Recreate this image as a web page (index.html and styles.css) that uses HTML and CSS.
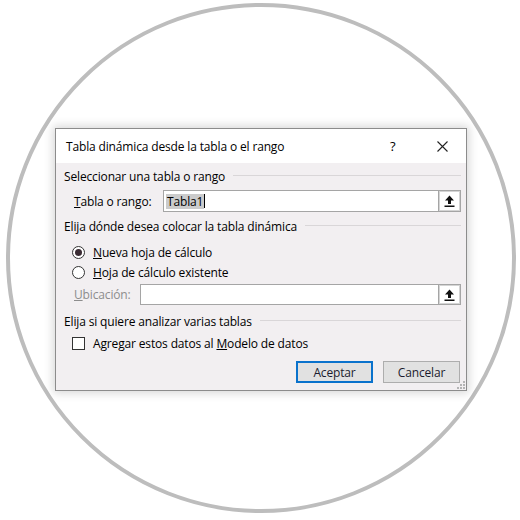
FILE: index.html
```html
<!DOCTYPE html>
<html lang="es">
<head>
<meta charset="utf-8">
<title>Tabla dinámica</title>
<link rel="stylesheet" href="styles.css">
</head>
<body>
<div class="stage">
  <div class="ring"></div>
  <div class="dialog">
    <div class="titlebar">
      <span class="title">Tabla dinámica desde la tabla o el rango</span>
      <span class="help">?</span>
      <span class="close"><svg width="11" height="11" viewBox="0 0 11 11"><path d="M0.5 0.5 L10.5 10.5 M10.5 0.5 L0.5 10.5" stroke="#222" stroke-width="1.1" fill="none"/></svg></span>
    </div>
    <div class="body">
      <div class="group-head h1"><span>Seleccionar una tabla o rango</span><i class="rule"></i></div>
      <div class="field-row f1">
        <span class="lbl lbl1"><u>T</u>abla o rango:</span>
        <div class="input"><span class="sel">Tabla1</span><span class="caret"></span></div>
        <span class="pick"><svg width="11" height="12" viewBox="0 0 11 12"><path d="M5.5 0.5 L10 5.5 L7 5.5 L7 9 L4 9 L4 5.5 L1 5.5 Z" fill="#111"/><rect x="0.5" y="10.5" width="10" height="1.5" fill="#111"/></svg></span>
      </div>
      <div class="group-head h2"><span>Elija dónde desea colocar la tabla dinámica</span><i class="rule"></i></div>
      <div class="opt r1"><span class="radio on"></span><span><u>N</u>ueva hoja de cálculo</span></div>
      <div class="opt r2"><span class="radio"></span><span><u>H</u>oja de cálculo existente</span></div>
      <div class="field-row f2">
        <span class="lbl lbl2 dis"><u>U</u>bicación:</span>
        <div class="input"></div>
        <span class="pick"><svg width="11" height="12" viewBox="0 0 11 12"><path d="M5.5 0.5 L10 5.5 L7 5.5 L7 9 L4 9 L4 5.5 L1 5.5 Z" fill="#111"/><rect x="0.5" y="10.5" width="10" height="1.5" fill="#111"/></svg></span>
      </div>
      <div class="group-head h3"><span>Elija si quiere analizar varias tablas</span><i class="rule"></i></div>
      <div class="opt c1"><span class="check"></span><span>Agregar estos datos al <u>M</u>odelo de datos</span></div>
      <div class="actions">
        <span class="btn primary">Aceptar</span>
        <span class="btn">Cancelar</span>
      </div>
    </div>
    <svg class="grip" width="9" height="9" viewBox="0 0 9 9"><g fill="#b4b4b4"><rect x="7" y="1" width="2" height="2"/><rect x="4" y="4" width="2" height="2"/><rect x="7" y="4" width="2" height="2"/><rect x="1" y="7" width="2" height="2"/><rect x="4" y="7" width="2" height="2"/><rect x="7" y="7" width="2" height="2"/></g></svg>
  </div>
</div>
</body>
</html>
```

FILE: styles.css
```css
* { box-sizing: border-box; }
html, body { margin: 0; padding: 0; background: #fff; }
body { font-family: "Open Sans", "Noto Sans", "Liberation Sans", sans-serif; font-size: 12px; letter-spacing: -0.15px; color: #000; }
.stage { position: relative; width: 520px; height: 520px; padding: 128px 0 0 55px; }
.ring { position: absolute; left: 6px; top: 3px; width: 510px; height: 510px; border: 4px solid #bdbdbd; border-radius: 50%; }
.dialog { position: relative; width: 412px; border: 1px solid #8c8c8c; background: #f2eff1; box-shadow: 0 0 9px 2px rgba(0,0,0,0.16); }
.titlebar { height: 34px; background: #fff; display: flex; align-items: center; padding-left: 10px; font-size: 12px; }
.title { flex: 1; }
.help { width: 12px; margin-right: 35px; font-size: 13px; }
.close { width: 11px; height: 11px; margin-right: 18px; display: flex; }
.body { padding: 3px 5px 7px 8px; display: flex; flex-direction: column; }
.group-head { height: 20px; display: flex; align-items: center; gap: 8px; }
.rule { flex: 1; height: 1px; background: #d9d6d8; margin-top: -1px; }
.h2 { margin-top: 4px; }
.h3 { margin-top: 6px; }
.field-row { display: flex; align-items: stretch; height: 22px; }
.f1 { margin-top: 4px; padding-left: 10px; }
.f2 { margin-top: 2px; height: 21px; padding-left: 10px; }
.lbl { width: 89px; display: flex; align-items: center; }
.lbl2 { width: 66px; }
.dis { color: #8d8d8d; }
.input { flex: 1; background: #fff; border: 1px solid #a5a5a5; border-right: none; display: flex; align-items: center; padding-left: 2px; }
.sel { background: #cbcbcb; padding: 0 1px; line-height: 15px; }
.caret { width: 1px; height: 14px; background: #000; }
.pick { width: 23px; border: 1px solid #a5a5a5; background: #fff; display: flex; align-items: center; justify-content: center; box-shadow: inset 0 0 0 1px #d4d4d4; }
.opt { height: 20px; display: flex; align-items: center; gap: 8px; padding-left: 8px; }
.r1 { margin-top: 6px; }
.c1 { margin-top: 2px; }
.radio { width: 13px; height: 13px; border: 1px solid #333; border-radius: 50%; background: #fff; display: flex; align-items: center; justify-content: center; }
.radio.on::after { content: ""; width: 7px; height: 7px; border-radius: 50%; background: #3a2b33; }
.check { width: 13px; height: 13px; border: 1px solid #333; background: #fff; }
.actions { margin-top: 8px; display: flex; justify-content: flex-end; gap: 10px; padding-right: 1px; }
.btn { width: 77px; height: 22px; border: 1px solid #adadad; background: #e1e1e1; display: flex; align-items: center; justify-content: center; color: #1b1b2e; }
.btn.primary { border: 2px solid #0a72cc; }
.grip { position: absolute; right: 1px; bottom: 1px; }
```
